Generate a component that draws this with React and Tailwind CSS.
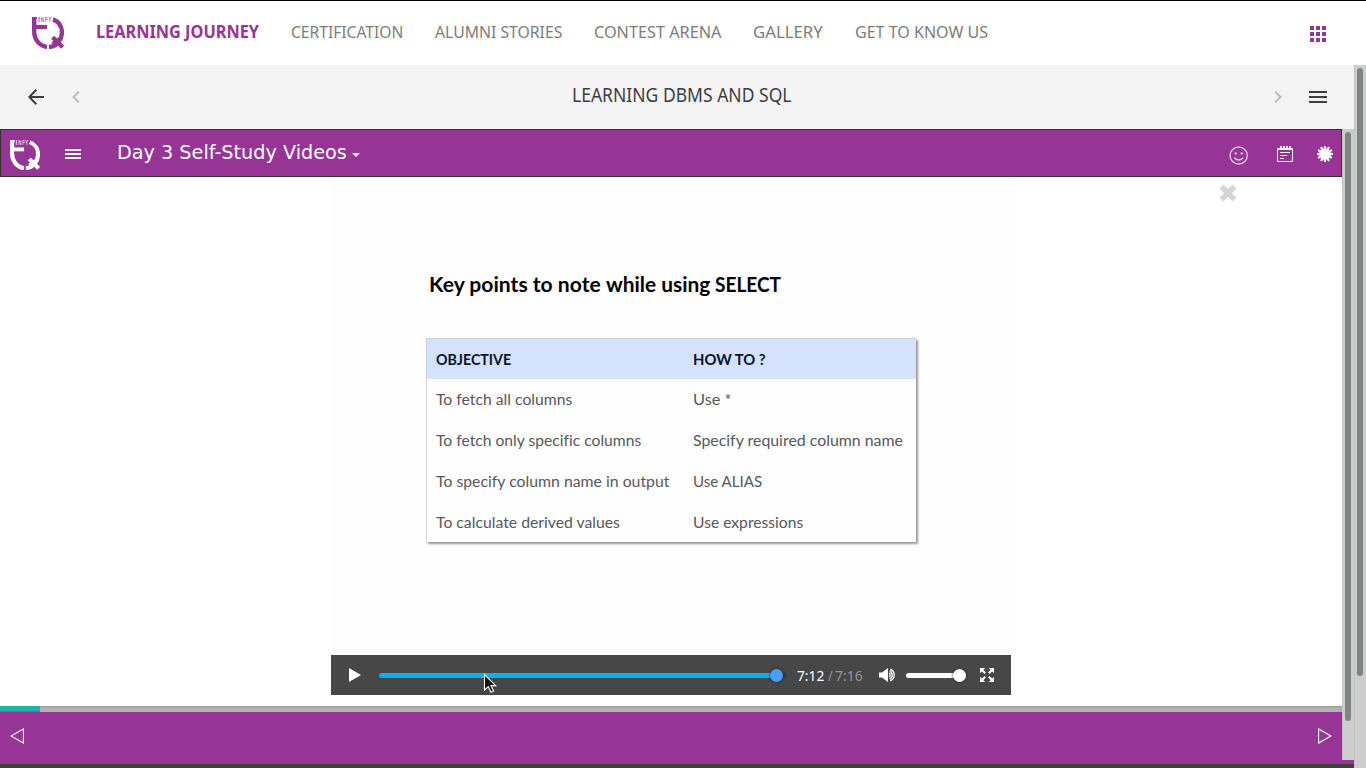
import { useLayoutEffect, useRef, useState } from "react";

// Draws a line of text condensed or widened to a given width.
function Fit({ w, className = "", children }) {
  const ref = useRef(null);
  const [scale, setScale] = useState(1);
  useLayoutEffect(() => {
    setScale(w / ref.current.offsetWidth);
  }, [w]);
  return (
    <span className={"block shrink-0 whitespace-nowrap " + className} style={{ width: w }}>
      <span ref={ref} className="inline-block origin-left" style={{ transform: `scaleX(${scale})` }}>
        {children}
      </span>
    </span>
  );
}

function Logo({ className }) {
  return (
    <svg viewBox="0 0 32 32" className={className} fill="none" stroke="currentColor">
      <path d="M2.2 0V14.5C2.2 22.5 7.5 29.3 15 29.9" strokeWidth="4.4" />
      <path d="M0 1H5" strokeWidth="2" />
      <path d="M2 10H15" strokeWidth="4.2" />
      <path d="M21 2.3C26.5 4.2 29.9 9.3 29.9 15.2C29.9 23.2 24.5 29.6 16.9 29.9" strokeWidth="4.4" />
      <path d="M20.6 20.3L30.6 30.3" strokeWidth="4.4" />
      <path d="M29.5 20.6L20.5 26.8" strokeWidth="3.6" />
      <g fill="currentColor" stroke="none" fontFamily="Liberation Sans, sans-serif" fontSize="7" fontWeight="bold" opacity=".8">
        <text x="6" y="5.2" textLength="2" lengthAdjust="spacingAndGlyphs">I</text>
        <text x="8.8" y="5.2" textLength="3.4" lengthAdjust="spacingAndGlyphs">N</text>
        <text x="13" y="5.2" textLength="2.8" lengthAdjust="spacingAndGlyphs">F</text>
        <text x="16.2" y="5.2" textLength="3.2" lengthAdjust="spacingAndGlyphs">Y</text>
      </g>
    </svg>
  );
}

const links = [
  ["CERTIFICATION", 112],
  ["ALUMNI STORIES", 127],
  ["CONTEST ARENA", 127],
  ["GALLERY", 70],
  ["GET TO KNOW US", 133],
];

const rows = [
  ["To fetch all columns", 136, "Use *", 38],
  ["To fetch only specific columns", 205, "Specify required column name", 210],
  ["To specify column name in output", 233.5, "Use ALIAS", 69],
  ["To calculate derived values", 184, "Use expressions", 110],
];

function TopNav() {
  return (
    <header className="flex h-[65px] shrink-0 items-center border-t border-black bg-white pl-8 pr-[40px] font-['Noto_Sans',sans-serif] text-[17px] text-[#7c7c7c]">
      <Logo className="h-8 w-8 text-[#963596]" />
      <Fit w={163} className="ml-8 mt-[-4px] text-[17.5px] font-bold text-[#963596]">LEARNING JOURNEY</Fit>
      <nav className="ml-8 mt-[-3px] flex gap-8">
        {links.map(([t, w]) => <Fit key={t} w={w}>{t}</Fit>)}
      </nav>
      <svg viewBox="0 0 16 16" className="ml-auto mt-[2px] h-4 w-4 fill-[#963596]" shapeRendering="crispEdges">
        {[0, 6, 12].map((y) => [0, 6, 12].map((x) => <rect key={x + "-" + y} x={x} y={y} width="4" height="4" />))}
      </svg>
    </header>
  );
}

function CourseBar() {
  return (
    <div className="flex h-16 shrink-0 items-center bg-[#f4f4f4] pl-7 pr-[27px] text-[#3c3d41]">
      <svg viewBox="0 0 16 16" className="h-4 w-4" fill="none" stroke="currentColor" strokeWidth="2">
        <path d="M16 8H1.5M8.3.8L1.4 8L8.3 15.2" />
      </svg>
      <svg viewBox="0 0 8 12" className="ml-7 h-3 w-2" fill="none" stroke="#bcbcbc" strokeWidth="2">
        <path d="M6.8 .8L1.5 6L6.8 11.2" />
      </svg>
      <Fit w={219.5} className="ml-[492px] mt-[-3px] font-['Noto_Sans',sans-serif] text-[19px]">LEARNING DBMS AND SQL</Fit>
      <svg viewBox="0 0 8 12" className="ml-auto h-3 w-2" fill="none" stroke="#bcbcbc" strokeWidth="2">
        <path d="M1.2 .8L6.5 6L1.2 11.2" />
      </svg>
      <svg viewBox="0 0 18 12" className="ml-[27px] h-3 w-[18px] fill-[#3c3d41]">
        <path d="M0 0H18V2H0zM0 5H18V7H0zM0 10H18V12H0z" />
      </svg>
    </div>
  );
}

function LessonBar() {
  const spikes = Array.from({ length: 12 }, (_, i) => i * 30);
  return (
    <div className="flex h-12 shrink-0 items-center border border-[#333] bg-[#963596] pl-[9px] pr-2 text-white">
      <Logo className="mt-[3px] h-[30px] w-[30px]" />
      <svg viewBox="0 0 16 10" className="ml-[25px] mt-[2px] h-[10px] w-4 fill-white">
        <path d="M0 0H16V2H0zM0 4H16V6H0zM0 8H16V10H0z" />
      </svg>
      <Fit w={229.5} className="ml-[36px] mt-[-2px] font-['DejaVu_Sans',sans-serif] text-[19px]">Day 3 Self-Study Videos</Fit>
      <span className="ml-[5px] mt-[3px] border-x-4 border-t-4 border-x-transparent border-t-white" />
      <svg viewBox="0 0 20 20" className="ml-auto mt-[4px] h-5 w-5 opacity-70" fill="none" stroke="white" strokeWidth="1.5">
        <circle cx="9.7" cy="10.5" r="8.6" />
        <path d="M5.5 12.5C6.9 15.8 12.5 15.8 13.9 12.5" />
        <circle cx="6.7" cy="8.4" r="1.2" fill="white" stroke="none" />
        <circle cx="12.7" cy="8.4" r="1.2" fill="white" stroke="none" />
      </svg>
      <svg viewBox="0 0 16 16" className="ml-7 mt-px h-4 w-4" fill="none" stroke="white">
        <path d="M.5 2.5H15.5V15.5H.5z" />
        <path d="M1 3H15" strokeWidth="2" />
        <path d="M4 0V4M7 0V4M10 0V4M13 0V4" strokeWidth="1.6" />
        <path d="M3 6.5H13M3 9.5H10M3 12.5H7" />
      </svg>
      <svg viewBox="-8 -8 16 16" className="ml-6 mt-[2px] h-4 w-4 fill-white">
        <circle r="5.8" />
        {spikes.map((a) => <path key={a} d="M-1.3 -5.3L-.9 -8H.9L1.3 -5.3z" transform={`rotate(${a})`} />)}
      </svg>
    </div>
  );
}

function Slide() {
  return (
    <div className="h-[478px] bg-[#fefefe] pl-[95px] pt-[92px] font-['Lato','Open_Sans',sans-serif]">
      <div className="ml-[3px] flex text-[20.5px] font-bold leading-[30px] text-black">
        <Fit w={177}>Key points to note&nbsp;</Fit>
        <Fit w={109}>while using&nbsp;</Fit>
        <Fit w={66}>SELECT</Fit>
      </div>
      <div className="mt-[39px] h-[204px] w-[490px] border-l border-t border-[#d0d0d0] bg-[#fefefe] text-[15.5px] text-[#58585a] shadow-[2px_2px_2px_#999]">
        <div className="grid h-10 grid-cols-[257px_1fr] items-center bg-[#d5e2fd] pl-[9px] text-[15px] font-bold text-[#07152f]">
          <Fit w={75}>OBJECTIVE</Fit>
          <Fit w={73}>HOW TO ?</Fit>
        </div>
        {rows.map(([a, aw, b, bw]) => (
          <div key={a} className="grid h-[41px] grid-cols-[257px_1fr] items-center pl-[9px] [font-variant-ligatures:none]">
            <Fit w={aw}>{a}</Fit>
            <Fit w={bw}>{b}</Fit>
          </div>
        ))}
      </div>
    </div>
  );
}

function Controls() {
  return (
    <div className="flex h-10 items-center bg-[#474747] pl-[18px] pr-[17px] text-white">
      <svg viewBox="0 0 12 14" className="h-[14px] w-3 fill-white"><path d="M0 0L12 7L0 14z" /></svg>
      <div className="relative ml-[18px] mt-px flex h-[5px] w-[407px] rounded-full bg-[#3a3a3a]">
        <div className="h-full w-[398px] rounded-full bg-[#00b4f0]" />
        <span className="absolute left-[391px] top-[-4px] h-[13px] w-[13px] rounded-full bg-[#489ef8] shadow-[0_0_3px_#222]" />
        <svg viewBox="0 0 14 20" className="absolute left-[105px] top-px h-5 w-[14px] overflow-visible">
          <path d="M.5 .5V16L4.3 12.7L7 18.3L9.6 17.1L7 11.6H11.7z" fill="#111" stroke="white" strokeWidth="1.1" />
        </svg>
      </div>
      <div className="ml-[11px] mt-[-1px] flex items-center font-['Noto_Sans',sans-serif] text-[15px] leading-5">
        <Fit w={27.5}>7:12</Fit>
        <Fit w={5} className="ml-[3px] text-[#969696]">/</Fit>
        <Fit w={28} className="ml-[2px] text-[#969696]">7:16</Fit>
      </div>
      <svg viewBox="0 0 17 14" className="ml-4 h-[14px] w-[17px]" fill="none" stroke="white" strokeWidth="1.3">
        <path d="M0 4.5H3L9 0V14L3 9.5H0z" fill="white" stroke="none" />
        <path d="M10.2 5C11.5 6 11.5 8 10.2 9M10.7 2.8C14 4.4 14 9.6 10.7 11.2M11.3 1.2C16.5 3.5 16.5 10.5 11.3 12.8" />
      </svg>
      <div className="relative ml-[10.5px] mt-px h-[5px] w-[60px] rounded-full bg-white">
        <span className="absolute right-0 top-[-4px] h-[13px] w-[13px] rounded-full bg-white shadow-[0_0_3px_#222]" />
      </div>
      <svg viewBox="0 0 14 14" className="ml-auto h-[14px] w-[14px]" fill="white" stroke="white" strokeWidth="2">
        {[0, 90, 180, 270].map((a) => (
          <g key={a} transform={`rotate(${a} 7 7)`}>
            <path d="M0 0H5.2L0 5.2z" stroke="none" />
            <path d="M1.5 1.5L5.2 5.2" />
          </g>
        ))}
      </svg>
    </div>
  );
}

function Scrollbar({ thumb }) {
  return (
    <div className="flex w-3 shrink-0 justify-center border-l border-[#c4c4c4] bg-[#cdcdcd] pr-px pt-[3px]">
      <div className={"w-[6px] rounded-full bg-[#7f8383] " + thumb} />
    </div>
  );
}

export default function App() {
  return (
    <div className="flex h-[768px] w-[1366px] flex-col overflow-hidden bg-white">
      <TopNav />
      <div className="flex h-[703px]">
        <main className="flex w-[1354px] flex-col">
          <CourseBar />
          <div className="flex h-[631px]">
            <section className="flex w-[1342px] flex-col">
              <LessonBar />
              <div className="flex h-[529px] bg-white pl-[331px]">
                <div className="w-[680px]">
                  <Slide />
                  <Controls />
                </div>
                <svg viewBox="0 0 18 18" className="ml-[207.5px] mt-[7px] h-[18px] w-[18px]" stroke="#d5d5d5" strokeWidth="5.4">
                  <path d="M2.5 2.5L15.5 15.5M15.5 2.5L2.5 15.5" />
                </svg>
              </div>
              <div className="h-[6px] bg-[#b1b1b1] shadow-[inset_0_1px_1px_#999]">
                <div className="h-full w-10 border-b border-[#1d9995] bg-[#20b2aa]" />
              </div>
              <footer className="flex h-12 items-center justify-between bg-[#963596] px-[10px]">
                <svg viewBox="0 0 14 16" className="h-4 w-[14px]" fill="none" stroke="white" strokeWidth="1.1"><path d="M13.4 1V15L1 8z" /></svg>
                <svg viewBox="0 0 14 16" className="h-4 w-[14px]" fill="none" stroke="white" strokeWidth="1.1"><path d="M.6 1V15L13 8z" /></svg>
              </footer>
            </section>
            <Scrollbar thumb="h-[589px]" />
          </div>
          <div className="h-1 bg-[#963596]" />
          <div className="h-1 bg-[#3f3f3f]" />
        </main>
        <Scrollbar thumb="h-[608px]" />
      </div>
    </div>
  );
}
